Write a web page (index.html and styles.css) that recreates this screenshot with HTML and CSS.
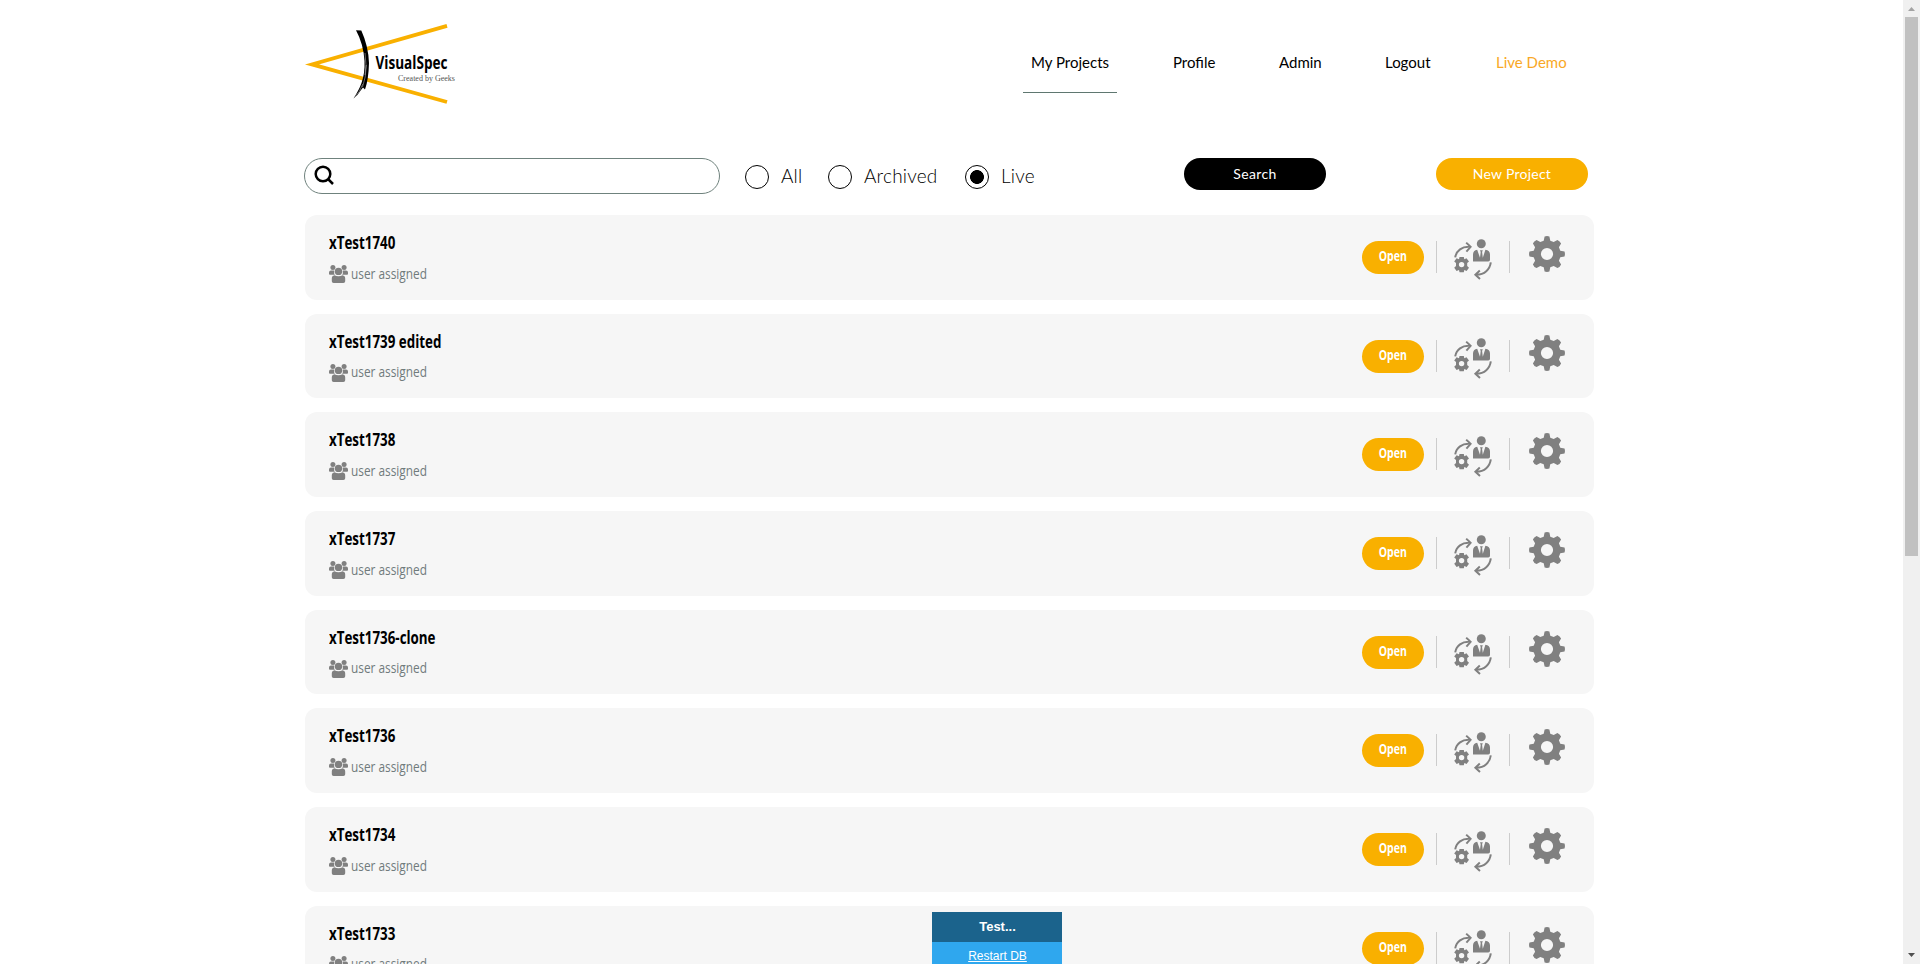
FILE: index.html
```html
<!DOCTYPE html>
<html lang="en">
<head>
<meta charset="utf-8">
<title>VisualSpec - My Projects</title>
<link rel="stylesheet" href="styles.css">
</head>
<body>
<svg class="defs" width="0" height="0">
  <symbol id="users" viewBox="0 0 19 18">
    <circle cx="3.9" cy="2.6" r="2.5"/><circle cx="15.1" cy="2.6" r="2.5"/>
    <path d="M0 9V7.4Q0 5.4 2 5.4H5.2V9Q6 9.6 6 9.8H1Q0 9.8 0 9ZM19 9V7.4Q19 5.4 17 5.4H13.8V9Q13 9.6 13 9.8H18Q19 9.8 19 9Z"/>
    <circle cx="9.5" cy="6.4" r="3.7"/>
    <path d="M5.6 10.2Q7 11.3 9.5 11.3T13.4 10.2Q16.2 10.8 16.2 13.4V16.2Q16.2 18 14.4 18H4.6Q2.8 18 2.8 16.2V13.4Q2.8 10.8 5.6 10.2Z"/>
  </symbol>
  <symbol id="gear" viewBox="0 0 36 36">
    <path fill-rule="evenodd" d="M15.6 0.5Q18 -.4 20.4.5L21.3 4.7L24.7 6.1L28.4 3.9Q31 4.9 32.1 7.6L29.9 11.3L31.3 14.7L35.5 15.6Q36.4 18 35.5 20.4L31.3 21.3L29.9 24.7L32.1 28.4Q31 31.1 28.4 32.1L24.7 29.9L21.3 31.3L20.4 35.5Q18 36.4 15.6 35.5L14.7 31.3L11.3 29.9L7.6 32.1Q4.9 31.1 3.9 28.4L6.1 24.7L4.7 21.3L.5 20.4Q-.4 18 .5 15.6L4.7 14.7L6.1 11.3L3.9 7.6Q4.9 4.9 7.6 3.9L11.3 6.1L14.7 4.7ZM18 11.9A6.1 6.1 0 1 0 18 24.1A6.1 6.1 0 1 0 18 11.9Z"/>
  </symbol>
  <symbol id="transfer" viewBox="0 0 38 41">
    <circle cx="27.3" cy="4.8" r="4.5"/>
    <path d="M19 22.2V15.5Q19 11.6 23.2 10.8L26 18.8L26.7 13L26 11.2H28.8L28.1 13L28.8 18.8L31.4 10.8Q36 11.6 36 15.5V20.7Q36 22.4 34.3 22.4H19.2Z"/>
    <path class="line" d="M1.2 18.3C2.4 11.5 8 7.4 15.8 7.9M12.2 3.6L16.6 7.9L12.4 12.6M36.8 23.3C35.8 30.5 30.6 35.6 22.3 35.7M25.8 31.5L21.4 35.7L26 39.9"/>
    <path fill-rule="evenodd" d="M5.5 18H9.8L10.3 20.2L12.5 19.2L15 22.4L13.2 24.1V27L15 28.7L12.6 31.9L10.3 30.9L9.8 33.3H5.5L5 30.9L2.6 31.9L.2 28.7L2 27V24.1L.2 22.4L2.6 19.2L5 20.2ZM7.6 22.9A2.7 2.7 0 1 0 7.6 28.3A2.7 2.7 0 1 0 7.6 22.9Z"/>
  </symbol>
</svg>

<div class="page">
  <header class="header">
    <svg class="logo" width="155" height="84" viewBox="0 0 155 84">
      <path class="beam" d="M143 1.9L8 40.4L143 78"/>
      <path d="M52 6.2L57.3 6.5Q64.4 22 65 39Q64.5 56 61 65.5L59 63.5L57 66Q54 71 49.5 74.5Q55 66 57.5 59Q61 49 60.5 37Q59.5 20 52 6.2Z"/>
      <path class="grain" d="M62.3 41Q62 54 58.5 63M61 29Q63 42 61 51M58.8 60Q56 68 50.5 73.5"/>
      <text class="logo-name" x="71.5" y="45.3" textLength="72" lengthAdjust="spacingAndGlyphs">VisualSpec</text>
      <text class="logo-tag" x="94" y="57" textLength="57" lengthAdjust="spacingAndGlyphs">Created by Geeks</text>
    </svg>
    <nav class="nav">
      <a class="nav-item active">My Projects</a>
      <a class="nav-item profile">Profile</a>
      <a class="nav-item admin">Admin</a>
      <a class="nav-item logout">Logout</a>
      <a class="nav-item demo">Live Demo</a>
    </nav>
  </header>

  <section class="filters">
    <div class="search-box">
      <svg width="21" height="21" viewBox="0 0 21 21"><circle cx="9" cy="9" r="7.3"/><path d="M14 14L19 19"/></svg>
    </div>
    <div class="radios">
      <label class="radio all"><i class="dot"></i><span>All</span></label>
      <label class="radio archived"><i class="dot"></i><span>Archived</span></label>
      <label class="radio live"><i class="dot checked"></i><span>Live</span></label>
    </div>
    <button class="btn search"><span>Search</span></button>
    <button class="btn create"><span>New Project</span></button>
  </section>

  <main class="list" id="list"></main>
</div>

<aside class="test-panel"><div class="test-head">Test...</div><div class="test-body"><a>Restart DB</a></div></aside>

<div class="scrollbar">
  <svg width="17" height="17" viewBox="0 0 17 17"><path fill="#a3a3a3" d="M5 11H12L8.5 7Z"/></svg>
  <div class="thumb"></div>
  <svg class="down" width="17" height="17" viewBox="0 0 17 17"><path fill="#505050" d="M5 6H12L8.5 10Z"/></svg>
</div>
<script src="app.js"></script>
</body>
</html>
```
FILE: app.js
```js
const projects = ["xTest1740", "xTest1739 edited", "xTest1738", "xTest1737",
  "xTest1736-clone", "xTest1736", "xTest1734", "xTest1733"];

document.getElementById("list").innerHTML = projects.map(name => `
  <article class="card">
    <div class="info">
      <h2 class="title">${name}</h2>
      <div class="assigned"><svg width="19" height="18"><use href="#users"/></svg><span>user assigned</span></div>
    </div>
    <div class="actions">
      <button class="open"><span>Open</span></button>
      <div class="cell"><svg class="transfer" width="38" height="41"><use href="#transfer"/></svg></div>
      <div class="cell last"><svg class="gear" width="36" height="36"><use href="#gear"/></svg></div>
    </div>
  </article>`).join("");
```
FILE: styles.css
```css
* { box-sizing: border-box; }
body { margin: 0; height: 964px; overflow: hidden; background: #fff; font-family: Lato, "Open Sans", sans-serif; color: #000; }
.defs { display: block; position: absolute; }
button { border: 0; padding: 0; font-family: inherit; color: #fff; }
.page { width: 1290px; margin-left: 304px; }

.header { display: flex; justify-content: space-between; height: 158px; padding-top: 24px; }
.logo { display: block; flex: none; }
.beam { fill: none; stroke: #f9b000; stroke-width: 3.8; stroke-miterlimit: 10; }
.grain { fill: none; stroke: #aaa; stroke-width: .6; }
.logo-name { font: 700 17px "Open Sans", sans-serif; }
.logo-tag { font: 8px "Liberation Serif", serif; fill: #555; }
.nav { display: flex; gap: 48px; padding-right: 19px; height: 69px; font-size: 15px; line-height: 18px; }
.nav-item { height: 69px; padding: 29px 8px 0; white-space: nowrap; }
.active { width: 94px; height: 69px; border-bottom: 1px solid #5f7770; }
.profile, .admin { width: 58px; }
.logout { width: 63px; }
.demo { width: 87px; color: #f9a825; }

.filters { display: flex; height: 57px; align-items: flex-start; }
.search-box { width: 416px; height: 36px; border: 1px solid #6f827d; border-radius: 18px; padding: 6px 0 0 9px; }
.search-box svg { display: block; fill: none; stroke: #000; stroke-width: 2.5; }
.radios { display: flex; width: 439px; height: 36px; padding: 7px 0 0 25px; }
.radio { display: flex; height: 24px; align-items: center; font-size: 19px; font-weight: 300; line-height: 22px; letter-spacing: .2px; white-space: nowrap; }
.radio span { padding-bottom: 2px; }
.all { width: 83px; }
.archived { width: 137px; }
.dot { width: 24px; height: 24px; border: 1px solid #000; border-radius: 50%; margin-right: 12px; flex: none; }
.checked { background: radial-gradient(circle, #000 6.6px, transparent 7.2px); }
.btn { height: 32px; border-radius: 16px; font-size: 14px; letter-spacing: .35px; padding-bottom: 2px; }
.search { width: 142px; background: #000; margin-left: 25px; }
.create { width: 152px; background: #f9b000; margin-left: 110px; letter-spacing: .25px; }

.list { display: grid; gap: 14px; grid-auto-rows: 84.7px; padding-left: 1px; }
.card { display: flex; justify-content: space-between; background: #f6f6f6; border-radius: 12px; padding-left: 24px; font-family: "Open Sans", sans-serif; }
.title { margin: 15px 0 0; font-size: 18px; font-weight: 700; line-height: 25px; transform: scaleX(.742); transform-origin: left; white-space: nowrap; }
.assigned { display: flex; margin-top: 10px; height: 18px; align-items: center; color: #707b7c; font-size: 15px; line-height: 18px; }
.assigned svg { fill: #808080; margin-right: 3px; flex: none; }
.assigned span { padding-bottom: 3px; transform: scaleX(.79); transform-origin: left; white-space: nowrap; }
.actions { display: flex; padding-top: 26px; }
.open { width: 62px; height: 33px; border-radius: 17px; background: #f9b000; font: 700 14px/30px "Open Sans", sans-serif; padding-bottom: 3px; }
.open span { display: inline-block; transform: scaleX(.75); }
.cell { width: 73px; height: 32px; border-left: 1px solid #ccc; margin-left: 12px; padding-left: 17px; fill: #808080; }
.cell.last { width: 85px; margin-left: 0; padding-left: 19px; }
.transfer { display: block; margin-top: -2px; }
.line { fill: none; stroke: #808080; stroke-width: 2; }
.gear { display: block; margin-top: -5px; }

.test-panel { position: absolute; left: 932px; top: 912px; width: 130px; height: 52px; text-align: center; color: #fff; font-family: "Liberation Sans", Arial, sans-serif; }
.test-head { height: 30px; line-height: 29px; background: #1b638c; font-size: 13px; font-weight: 700; padding-left: 1px; }
.test-body { height: 22px; padding: 6px 0 0 1px; line-height: 16px; background: #2fa7ee; font-size: 12px; text-decoration: underline; }
.scrollbar { position: absolute; right: 0; top: 0; width: 17px; height: 964px; background: #f0f0f0; display: flex; flex-direction: column; }
.thumb { height: 539px; margin: 0 2px; background: #c1c1c1; }
.down { margin-top: auto; }
```
